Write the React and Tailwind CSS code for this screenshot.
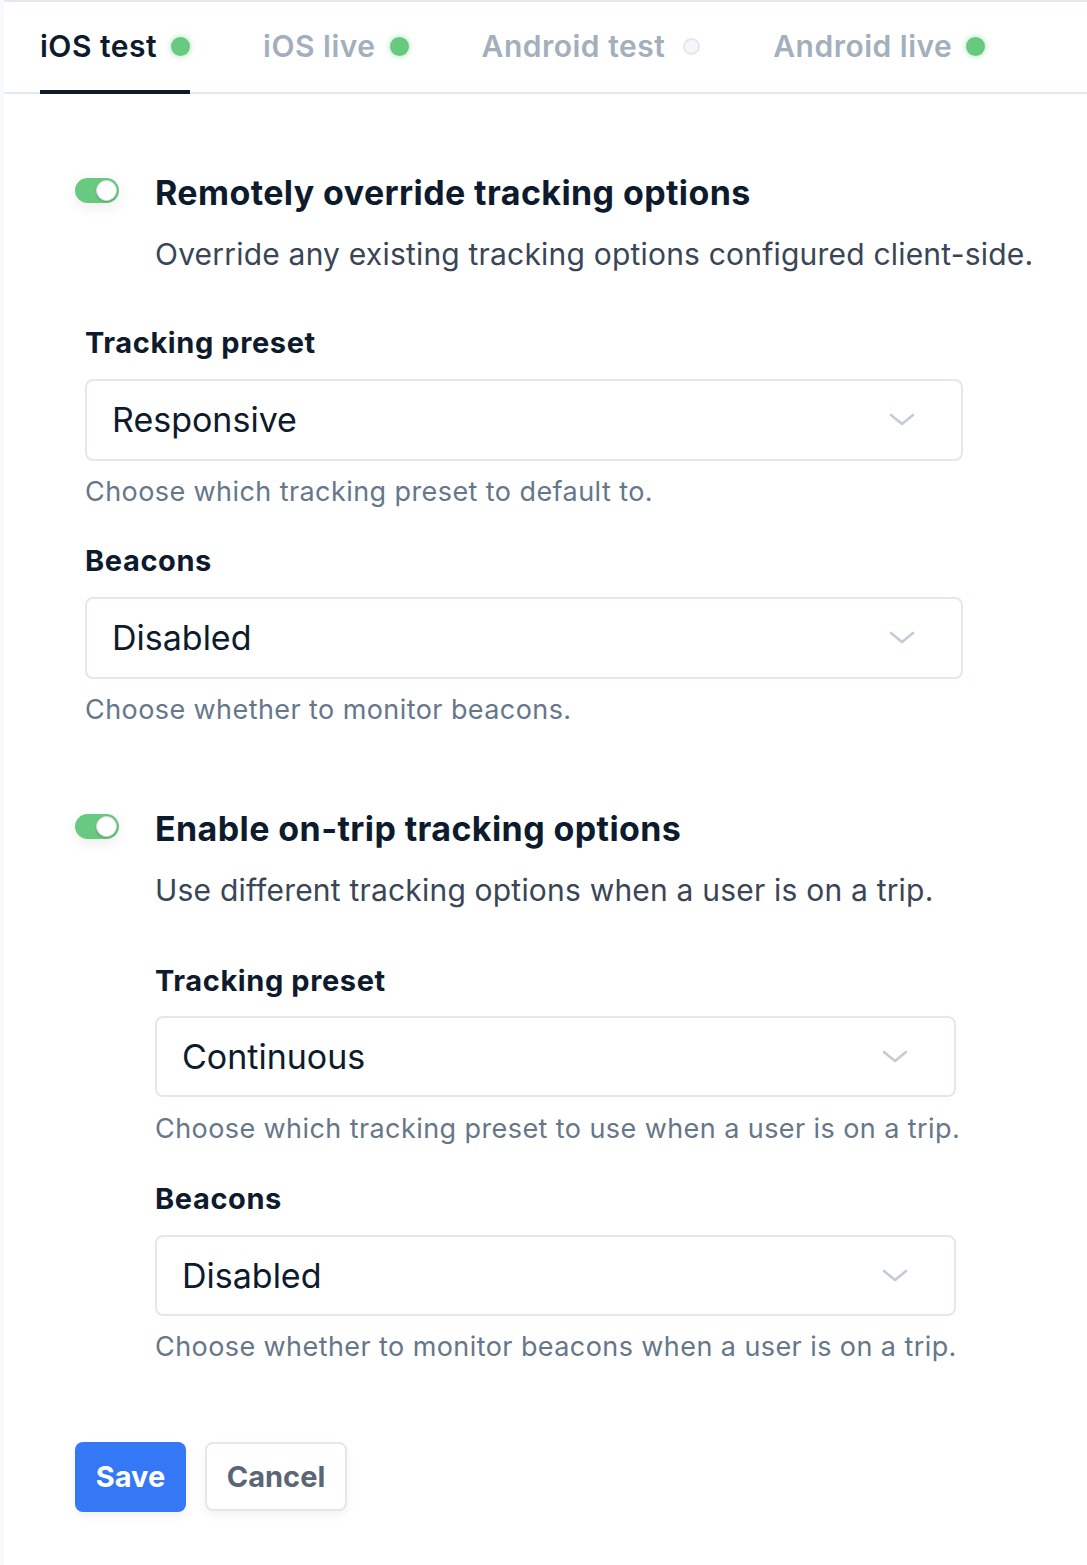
import React from "react";

const font = { fontFamily: "Inter, 'Noto Sans', sans-serif" };

function Dot({ on }) {
  return on ? (
    <span className="ml-[14px] inline-block h-[19px] w-[19px] rounded-full bg-[#68c981] shadow-[0_0_6px_rgba(104,201,129,0.6)]" />
  ) : (
    <span className="ml-[18px] inline-block h-[17px] w-[17px] rounded-full border-2 border-[#e3e8f0] bg-[#f5f7fb]" />
  );
}

function Tab({ label, on, active }) {
  return (
    <div className="relative flex h-full items-center pb-[2px]">
      <span
        className={
          "text-[30px] font-semibold tracking-[0.5px] " +
          (active ? "text-[#0d1b2c]" : "text-[#a4afbe]")
        }
      >
        {label}
      </span>
      <Dot on={on} />
      {active && (
        <span className="absolute bottom-[-2px] left-0 right-0 h-[4px] bg-[#0d1b2c]" />
      )}
    </div>
  );
}

function Toggle() {
  return (
    <div className="relative mt-[5px] h-[25px] w-[44px] shrink-0 rounded-full bg-[#68c981] shadow-[0_4px_14px_rgba(0,0,0,0.08)]">
      <span className="absolute right-[2px] top-[2px] h-[21px] w-[21px] rounded-full border border-[#d6dbe4] bg-white shadow-[0_1px_2px_rgba(0,0,0,0.2)]" />
    </div>
  );
}

function Chevron() {
  return (
    <svg width="26" height="14" viewBox="0 0 26 14" fill="none">
      <path d="M2 2 L13 11 L24 2" stroke="#c2cbd7" strokeWidth="2.6" strokeLinecap="round" strokeLinejoin="round" />
    </svg>
  );
}

function Select({ value, width, height, mt }) {
  return (
    <div
      className={
        "flex items-center justify-between rounded-[8px] border-2 border-[#e2e8f0] bg-white pl-[25px] pr-[46px] " +
        width + " " + height + " " + mt
      }
    >
      <span className="text-[34px] leading-[40px] text-[#0d1b2c]">{value}</span>
      <Chevron />
    </div>
  );
}

const labelCls = "text-[29px] font-bold leading-[36px] tracking-[0.6px] text-[#0d1b2c]";
const helpCls = "text-[27px] leading-[36px] tracking-[0.42px] text-[#66778a]";
const headCls = "text-[34px] font-bold leading-[40px] tracking-[0.4px] text-[#0d1b2c]";
const descCls = "text-[30px] leading-[40px] tracking-[0.2px] text-[#3a4656]";

export default function App() {
  return (
    <div style={font} className="min-h-[1565px] w-full bg-[#f7f9fc] pl-[4px]">
      <div className="min-h-[1565px] border-t-2 border-[#e2e8f0] bg-white">
        {/* Tabs */}
        <div className="flex h-[92px] gap-[73px] border-b-2 border-[#e2e8f0] pl-[36px]">
          <Tab label="iOS test" on active />
          <Tab label="iOS live" on />
          <Tab label="Android test" />
          <Tab label="Android live" on />
        </div>

        <div className="pl-[71px]">
          {/* Section 1 */}
          <div className="mt-[79px] flex">
            <Toggle />
            <div className="ml-[36px]">
              <h2 className={headCls}>Remotely override tracking options</h2>
              <p className={"mt-[21px] " + descCls}>
                Override any existing tracking options configured client-side.
              </p>
            </div>
          </div>

          <div className="pl-[10px]">
            <div className={"mt-[51px] " + labelCls}>Tracking preset</div>
            <Select value="Responsive" width="w-[878px]" height="h-[82px]" mt="mt-[18px]" />
            <div className={"mt-[13px] " + helpCls}>
              Choose which tracking preset to default to.
            </div>

            <div className={"mt-[33px] " + labelCls}>Beacons</div>
            <Select value="Disabled" width="w-[878px]" height="h-[82px]" mt="mt-[18px]" />
            <div className={"mt-[13px] " + helpCls}>
              Choose whether to monitor beacons.
            </div>
          </div>

          {/* Section 2 */}
          <div className="mt-[81px] flex">
            <Toggle />
            <div className="ml-[36px]">
              <h2 className={headCls}>Enable on-trip tracking options</h2>
              <p className={"mt-[21px] " + descCls}>
                Use different tracking options when a user is on a trip.
              </p>

              <div className={"mt-[53px] " + labelCls}>Tracking preset</div>
              <Select value="Continuous" width="w-[801px]" height="h-[81px]" mt="mt-[17px]" />
              <div className={"mt-[14px] " + helpCls}>
                Choose which tracking preset to use when a user is on a trip.
              </div>

              <div className={"mt-[34px] " + labelCls}>Beacons</div>
              <Select value="Disabled" width="w-[801px]" height="h-[81px]" mt="mt-[18px]" />
              <div className={"mt-[13px] " + helpCls}>
                Choose whether to monitor beacons when a user is on a trip.
              </div>
            </div>
          </div>

          {/* Buttons */}
          <div className="mt-[77px] flex gap-[19px]">
            <button className="h-[70px] w-[111px] rounded-[8px] bg-[#3578f6] text-[29px] font-bold text-white shadow-[0_4px_10px_rgba(0,0,0,0.06)]">
              Save
            </button>
            <button className="h-[69px] w-[142px] rounded-[8px] border-2 border-[#e2e8f0] bg-white text-[29px] font-bold text-[#5a6675] shadow-[0_4px_10px_rgba(0,0,0,0.05)]">
              Cancel
            </button>
          </div>
        </div>
      </div>
    </div>
  );
}
